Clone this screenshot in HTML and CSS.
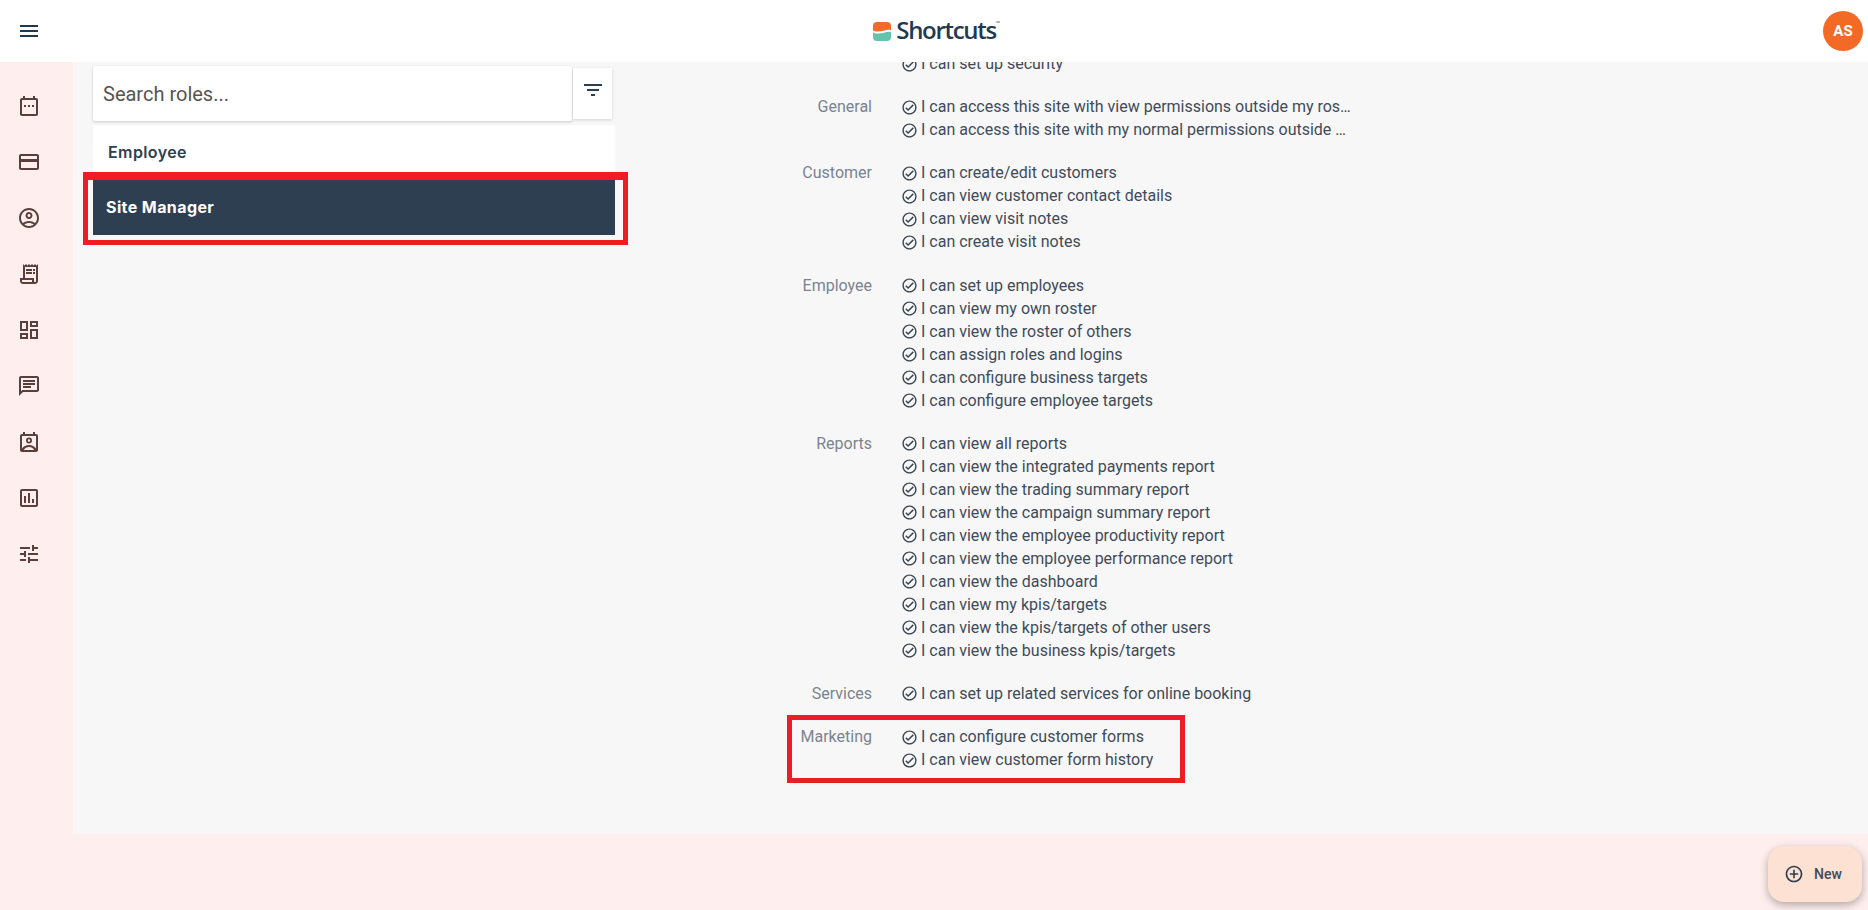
FILE: index.html
```html
<!DOCTYPE html>
<html>
<head>
<meta name="viewport" content="width=device-width, initial-scale=1">
<title>Shortcuts - Roles</title>
<link rel="stylesheet" href="styles.css">
</head>
<body>
<svg class="sprite" width="0" height="0">
  <symbol id="i-check" viewBox="0 0 24 24"><path d="M16.59 7.58L10 14.17l-2.59-2.58L6 13l4 4 8-8zM12 2C6.48 2 2 6.48 2 12s4.48 10 10 10 10-4.48 10-10S17.52 2 12 2zm0 18c-4.42 0-8-3.58-8-8s3.58-8 8-8 8 3.58 8 8-3.58 8-8 8z"/></symbol>
</svg>

<div class="topbar">
  <svg class="icon menu-icon" viewBox="0 0 24 24"><path d="M3 18h18v-2H3v2zm0-5h18v-2H3v2zm0-7v2h18V6H3z"/></svg>
  <div class="logo">
    <svg class="logo-mark" viewBox="0 0 18 19">
      <path fill="#f26b2b" d="M4 0h10a4 4 0 0 1 4 4v4.200C14 6.600 10 9.600 5.500 9.600 3.400 9.600 1.500 9.200 0 8.400V4a4 4 0 0 1 4-4z"/>
      <path fill="#63c4ad" d="M18 10v5a4 4 0 0 1-4 4H4a4 4 0 0 1-4-4v-4.600c1.600.8 3.500 1.200 5.500 1.200C10 11.600 14 9 18 10z"/>
    </svg>
    <span class="logo-text">Shortcuts<sup>™</sup></span>
  </div>
  <div class="avatar">AS</div>
</div>

<div class="middle">
  <div class="rail">
    <svg class="icon" viewBox="0 0 24 24"><path d="M19 4h-1V2h-2v2H8V2H6v2H5c-1.100 0-2 .9-2 2v14c0 1.100.9 2 2 2h14c1.100 0 2-.9 2-2V6c0-1.100-.9-2-2-2zm0 16H5V6h14v14zM7 11h2v2H7zm4 0h2v2h-2zm4 0h2v2h-2z"/></svg>
    <svg class="icon" viewBox="0 0 24 24"><path d="M20 4H4c-1.110 0-1.990.89-1.990 2L2 18c0 1.110.89 2 2 2h16c1.110 0 2-.89 2-2V6c0-1.110-.89-2-2-2zm0 14H4v-6h16v6zm0-9H4V6h16v3z"/></svg>
    <svg class="icon" viewBox="0 0 24 24"><path d="M12 2C6.480 2 2 6.480 2 12s4.480 10 10 10 10-4.480 10-10S17.520 2 12 2zM7.350 18.500C8.660 17.560 10.260 17 12 17s3.340.56 4.650 1.500c-1.310.94-2.910 1.500-4.650 1.500s-3.340-.56-4.650-1.500zm10.790-1.380C16.450 15.800 14.320 15 12 15s-4.450.8-6.140 2.120C4.700 15.730 4 13.950 4 12c0-4.420 3.580-8 8-8s8 3.580 8 8c0 1.950-.7 3.730-1.860 5.120z"/><path d="M12 6c-1.930 0-3.500 1.570-3.500 3.500S10.070 13 12 13s3.500-1.570 3.500-3.500S13.930 6 12 6zm0 5c-.83 0-1.500-.67-1.500-1.500S11.170 8 12 8s1.500.67 1.500 1.500S12.830 11 12 11z"/></svg>
    <svg class="icon" viewBox="0 0 24 24"><path d="M19.500 3.500L18 2l-1.500 1.500L15 2l-1.500 1.500L12 2l-1.500 1.500L9 2 7.500 3.500 6 2v14H3v3c0 1.660 1.340 3 3 3h12c1.660 0 3-1.340 3-3V2l-1.500 1.500zM15 20H6c-.55 0-1-.45-1-1v-1h10v2zm4-1c0 .55-.45 1-1 1s-1-.45-1-1v-3H8V5h11v14z"/><path d="M9 7h6v2H9zm7 0h2v2h-2zM9 10h6v2H9zm7 0h2v2h-2z"/></svg>
    <svg class="icon" viewBox="0 0 24 24"><path d="M19 5v2h-4V5h4M9 5v6H5V5h4m10 8v6h-4v-6h4M9 17v2H5v-2h4M21 3h-8v6h8V3zM11 3H3v10h8V3zm10 8h-8v10h8V11zm-10 4H3v6h8v-6z"/></svg>
    <svg class="icon" viewBox="0 0 24 24"><path d="M20 2H4c-1.100 0-1.990.9-1.990 2L2 22l4-4h14c1.100 0 2-.9 2-2V4c0-1.100-.9-2-2-2zm0 14H5.170L4 17.170V4h16v12zM6 12h8v2H6zm0-3h12v2H6zm0-3h12v2H6z"/></svg>
    <svg class="icon" viewBox="0 0 24 24"><path d="M19 4h-1V2h-2v2H8V2H6v2H5c-1.100 0-2 .9-2 2v14c0 1.100.9 2 2 2h14c1.100 0 2-.9 2-2V6c0-1.100-.9-2-2-2zm0 16H5V6h14v14z"/><path d="M12 7.500a3 3 0 1 0 0 6 3 3 0 0 0 0-6zm0 4.200a1.200 1.200 0 1 1 0-2.400 1.200 1.200 0 0 1 0 2.400zM12 15c-3 0-5.600 1.300-7 3.500V20h1.800c1-1.900 3-3.100 5.200-3.100s4.200 1.200 5.200 3.100H19v-1.500C17.600 16.300 15 15 12 15z"/></svg>
    <svg class="icon" viewBox="0 0 24 24"><path d="M9 17H7v-7h2v7zm4 0h-2V7h2v10zm4 0h-2v-4h2v4zm2 2H5V5h14v14zm0-16H5c-1.100 0-2 .9-2 2v14c0 1.100.9 2 2 2h14c1.100 0 2-.9 2-2V5c0-1.100-.9-2-2-2z"/></svg>
    <svg class="icon" viewBox="0 0 24 24"><path d="M3 17v2h6v-2H3zM3 5v2h10V5H3zm10 16v-2h8v-2h-8v-2h-2v6h2zM7 9v2H3v2h4v2h2V9H7zm14 4v-2H11v2h10zm-6-4h2V7h4V5h-4V3h-2v6z"/></svg>
  </div>

  <div class="content">
    <div class="roles">
      <div class="search-row">
        <div class="search-box">Search roles...</div>
        <div class="filter-btn">
          <svg class="filter-icon" viewBox="0 0 24 24"><path d="M10 18h4v-2h-4v2zM3 6v2h18V6H3zm3 7h12v-2H6v2z"/></svg>
        </div>
      </div>
      <div class="role-item">Employee</div>
      <div class="role-item selected marked">Site Manager</div>
    </div>

    <div class="perms">
      <div class="group">
        <div class="group-name"></div>
        <div class="group-rows">
          <div class="perm"><svg class="check"><use href="#i-check"/></svg><span>I can set up security</span></div>
        </div>
      </div>
      <div class="group">
        <div class="group-name">General</div>
        <div class="group-rows">
          <div class="perm"><svg class="check"><use href="#i-check"/></svg><span>I can access this site with view permissions outside my roster</span></div>
          <div class="perm"><svg class="check"><use href="#i-check"/></svg><span>I can access this site with my normal permissions outside my roster</span></div>
        </div>
      </div>
      <div class="group">
        <div class="group-name">Customer</div>
        <div class="group-rows">
          <div class="perm"><svg class="check"><use href="#i-check"/></svg><span>I can create/edit customers</span></div>
          <div class="perm"><svg class="check"><use href="#i-check"/></svg><span>I can view customer contact details</span></div>
          <div class="perm"><svg class="check"><use href="#i-check"/></svg><span>I can view visit notes</span></div>
          <div class="perm"><svg class="check"><use href="#i-check"/></svg><span>I can create visit notes</span></div>
        </div>
      </div>
      <div class="group">
        <div class="group-name">Employee</div>
        <div class="group-rows">
          <div class="perm"><svg class="check"><use href="#i-check"/></svg><span>I can set up employees</span></div>
          <div class="perm"><svg class="check"><use href="#i-check"/></svg><span>I can view my own roster</span></div>
          <div class="perm"><svg class="check"><use href="#i-check"/></svg><span>I can view the roster of others</span></div>
          <div class="perm"><svg class="check"><use href="#i-check"/></svg><span>I can assign roles and logins</span></div>
          <div class="perm"><svg class="check"><use href="#i-check"/></svg><span>I can configure business targets</span></div>
          <div class="perm"><svg class="check"><use href="#i-check"/></svg><span>I can configure employee targets</span></div>
        </div>
      </div>
      <div class="group">
        <div class="group-name">Reports</div>
        <div class="group-rows">
          <div class="perm"><svg class="check"><use href="#i-check"/></svg><span>I can view all reports</span></div>
          <div class="perm"><svg class="check"><use href="#i-check"/></svg><span>I can view the integrated payments report</span></div>
          <div class="perm"><svg class="check"><use href="#i-check"/></svg><span>I can view the trading summary report</span></div>
          <div class="perm"><svg class="check"><use href="#i-check"/></svg><span>I can view the campaign summary report</span></div>
          <div class="perm"><svg class="check"><use href="#i-check"/></svg><span>I can view the employee productivity report</span></div>
          <div class="perm"><svg class="check"><use href="#i-check"/></svg><span>I can view the employee performance report</span></div>
          <div class="perm"><svg class="check"><use href="#i-check"/></svg><span>I can view the dashboard</span></div>
          <div class="perm"><svg class="check"><use href="#i-check"/></svg><span>I can view my kpis/targets</span></div>
          <div class="perm"><svg class="check"><use href="#i-check"/></svg><span>I can view the kpis/targets of other users</span></div>
          <div class="perm"><svg class="check"><use href="#i-check"/></svg><span>I can view the business kpis/targets</span></div>
        </div>
      </div>
      <div class="group">
        <div class="group-name">Services</div>
        <div class="group-rows">
          <div class="perm"><svg class="check"><use href="#i-check"/></svg><span>I can set up related services for online booking</span></div>
        </div>
      </div>
      <div class="group marked">
        <div class="group-name">Marketing</div>
        <div class="group-rows">
          <div class="perm"><svg class="check"><use href="#i-check"/></svg><span>I can configure customer forms</span></div>
          <div class="perm"><svg class="check"><use href="#i-check"/></svg><span>I can view customer form history</span></div>
        </div>
      </div>
    </div>
  </div>
</div>

<div class="bottom-strip"></div>

<div class="new-btn">
  <svg class="new-icon" viewBox="0 0 24 24"><path d="M13 7h-2v4H7v2h4v4h2v-4h4v-2h-4V7zm-1-5C6.480 2 2 6.480 2 12s4.480 10 10 10 10-4.480 10-10S17.520 2 12 2zm0 18c-4.410 0-8-3.590-8-8s3.590-8 8-8 8 3.590 8 8-3.590 8-8 8z"/></svg>
  New
</div>
</body>
</html>
```

FILE: styles.css
```css
html, body {
  margin: 0;
  height: 100%;
  overflow: hidden;
}

body {
  display: flex;
  flex-direction: column;
  position: relative;
  background-color: #feeeed;
  font-family: Roboto, "Liberation Sans", Arial, sans-serif;
  color: #3f4b5a;
}

.sprite {
  position: absolute;
}

/* top bar */
.topbar {
  position: relative;
  z-index: 2;
  flex: 0 0 62px;
  display: flex;
  align-items: center;
  justify-content: space-between;
  padding: 0 5px 0 17px;
  background-color: #fff;
}

.icon {
  display: block;
  width: 24px;
  height: 24px;
  fill: #5a3f3c;
}

.menu-icon {
  fill: #1f3a50;
}

.logo {
  display: flex;
  align-items: center;
  gap: 5px;
  margin-left: 9px;
}

.logo-mark {
  width: 18px;
  height: 19px;
}

.logo-text {
  font-family: "Open Sans", sans-serif;
  font-size: 24px;
  font-weight: 600;
  letter-spacing: -1.3px;
  line-height: 30px;
  margin-top: -2px;
  color: #1f3a50;
}

.logo-text sup {
  font-size: 5px;
  vertical-align: 14px;
  line-height: 0;
  letter-spacing: 0;
}

.avatar {
  width: 40px;
  height: 40px;
  border-radius: 50%;
  background-color: #f26a25;
  color: #fff;
  font-size: 15px;
  font-weight: 700;
  line-height: 40px;
  text-align: center;
}

/* middle */
.middle {
  flex: 0 0 772px;
  display: flex;
  min-height: 0;
}

.rail {
  flex: 0 0 73px;
  box-sizing: border-box;
  display: flex;
  flex-direction: column;
  gap: 32px;
  padding: 32px 0 0 17px;
}

.content {
  flex: 1;
  display: flex;
  overflow: hidden;
  background-color: #f7f7f7;
}

/* roles list */
.roles {
  flex: 0 0 522px;
  margin-left: 20px;
  padding-top: 4px;
}

.search-row {
  display: flex;
  align-items: center;
  height: 55px;
  margin-right: 3px;
  margin-bottom: 4px;
}

.search-box {
  flex: 1;
  height: 54px;
  padding: 1px 0 0 10px;
  background-color: #fff;
  border-radius: 2px;
  box-shadow: 0 1px 3px rgba(0, 0, 0, 0.18);
  font-size: 20px;
  line-height: 55px;
  color: #555;
}

.filter-btn {
  flex: 0 0 39px;
  height: 51px;
  margin-left: 1px;
  display: flex;
  justify-content: center;
  background-color: #fff;
  box-shadow: 0 1px 3px rgba(0, 0, 0, 0.15);
}

.filter-icon {
  width: 24px;
  height: 24px;
  margin-top: 10px;
  fill: #2e3f52;
}

.role-item {
  height: 55px;
  padding-left: 15px;
  background-color: #fff;
  font-family: Inter, sans-serif;
  font-size: 16px;
  font-weight: 600;
  letter-spacing: 0.4px;
  line-height: 55px;
  color: #2e3f52;
}

.role-item.selected {
  background-color: #2e3f52;
  color: #fff;
  font-weight: 700;
  padding-left: 13px;
}

.marked {
  position: relative;
}

.marked::after {
  content: "";
  position: absolute;
  box-sizing: border-box;
  border: 5px solid #ee1c25;
}

.role-item.marked::after {
  top: -8px;
  left: -10px;
  right: -13px;
  bottom: -10px;
  border-top-width: 8px;
}

/* permissions */
.perms {
  margin-left: 157px;
  margin-top: -10px;
  width: 578px;
}

.group {
  display: flex;
  margin-bottom: 20.2px;
  font-size: 16px;
  line-height: 23px;
}

.group.marked::after {
  top: -10px;
  left: 15px;
  width: 398px;
  bottom: -12px;
}

.group-name {
  flex: 0 0 100px;
  margin-right: 29px;
  text-align: right;
  color: #7a8490;
}

.group-rows {
  width: 450px;
}

.perm {
  display: flex;
  align-items: center;
  height: 23px;
}

.perm span {
  overflow: hidden;
  white-space: nowrap;
  text-overflow: ellipsis;
}

.check {
  flex: 0 0 17px;
  width: 17px;
  height: 17px;
  margin-right: 3px;
  margin-top: 1px;
  fill: #3a4552;
}

/* bottom */
.bottom-strip {
  flex: 1;
}

.new-btn {
  position: absolute;
  left: 1768px;
  top: 846px;
  box-sizing: border-box;
  width: 94px;
  height: 56px;
  display: flex;
  align-items: center;
  gap: 10px;
  padding-left: 16px;
  background-color: #fde1d3;
  border-radius: 16px;
  box-shadow: 0 3px 8px rgba(0, 0, 0, 0.3);
  font-size: 14px;
  font-weight: 500;
  color: #3f4b5a;
}

.new-icon {
  width: 20px;
  height: 20px;
  fill: #2e3f52;
}
```
